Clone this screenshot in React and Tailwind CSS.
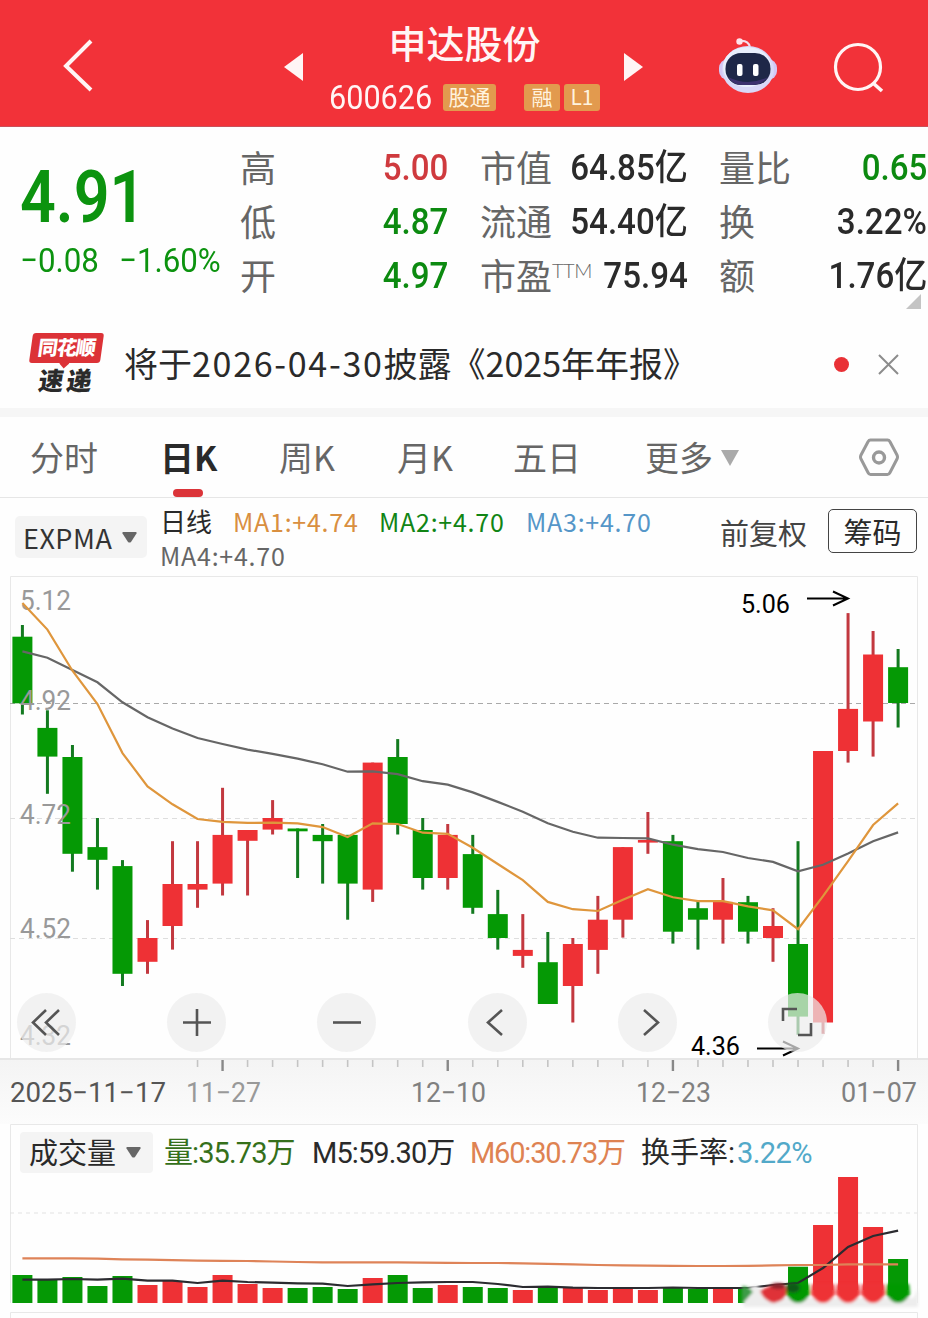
import React from "react";

const RED = "#ee3135";
const GREEN = "#059905";

// one row per trading day: [direction, high, body top, body bottom, low, volume top]
const days = [
  ["g", 625, 636.7, 703.3, 714.5, 1275],
  ["g", 710.3, 727.9, 756.6, 793.8, 1280],
  ["g", 745, 757, 853.8, 871.7, 1277],
  ["g", 818, 847.1, 859.8, 889.6, 1286],
  ["g", 860.1, 866.1, 973.8, 986, 1276],
  ["r", 920.1, 938, 961.8, 973.8, 1285],
  ["r", 841.2, 884, 926, 949.6, 1281],
  ["r", 841.2, 884, 889.6, 907.8, 1287],
  ["r", 787.8, 834.9, 883.6, 895.5, 1275],
  ["r", 830, 830, 840.8, 895.5, 1284],
  ["r", 800.1, 818, 829.6, 834.5, 1288],
  ["g", 828.5, 828.5, 831.3, 878, 1288],
  ["g", 824, 834.9, 841.2, 883.6, 1287],
  ["g", 834.9, 834.9, 883.6, 919.7, 1289],
  ["r", 762.6, 762.6, 889.6, 901.9, 1278],
  ["g", 739.1, 757, 824, 834.5, 1275],
  ["g", 818, 830, 878, 889.6, 1288],
  ["r", 824, 834.9, 878, 889.6, 1285],
  ["g", 834.9, 854.1, 907.8, 913.8, 1287],
  ["g", 889.9, 914.1, 938, 949.6, 1288],
  ["r", 914.1, 949.9, 955.9, 967.8, 1290],
  ["g", 932, 962.2, 1004, 1004, 1288],
  ["r", 938, 944, 986, 1022.5, 1287],
  ["r", 895.9, 919.7, 949.9, 973.8, 1290],
  ["r", 847.1, 847.1, 919.7, 937.6, 1289],
  ["r", 812, 840, 842.6, 853.8, 1290],
  ["g", 834.9, 841.2, 931.7, 943.6, 1287],
  ["g", 901.9, 908.2, 919.7, 949.6, 1289],
  ["r", 878, 901.9, 919.7, 943.6, 1289],
  ["g", 895.9, 902.2, 931.7, 943.6, 1288],
  ["r", 908.2, 926, 938, 961.8, 1285],
  ["g", 841.2, 944, 1016.6, 1034.8, 1266.7],
  ["r", 751, 751, 1022.5, 1033.8, 1225],
  ["r", 613.1, 708.9, 751, 762.6, 1177],
  ["r", 631, 654.5, 721.5, 756.6, 1227],
  ["g", 649, 667.2, 703, 727.5, 1259],
];

const fastLine = [
  603, 629.6, 670.7, 704, 753.1, 786.4, 804.3, 819, 821.9, 822.9, 822.6, 823.3,
  827.1, 837, 823.3, 824, 832.7, 833.8, 847.8, 864, 880.1, 901.9, 909.2, 911,
  899.8, 889.2, 897.3, 901.2, 901.2, 906.4, 910.3, 929.2, 896.2, 861.2, 825,
  803.3,
];

const slowLine = [
  651.4, 657.7, 670, 682.3, 702.3, 717.3, 728.6, 738, 744, 749.6, 753.8, 758.7,
  764.3, 771.7, 771.4, 774.2, 781.2, 784.7, 792.4, 801.9, 811.7, 823.3, 831.7,
  837.7, 838, 838.4, 844.7, 849.2, 852, 858, 861.9, 871.3, 864.7, 853.4, 841.2,
  832.4,
];

const volM5 = [
  1279.7, 1279.7, 1279, 1279.7, 1278.7, 1280.7, 1280.7, 1283, 1280.7, 1282,
  1282.7, 1283.3, 1283.7, 1286, 1284.3, 1283, 1282.3, 1282, 1282, 1284, 1287,
  1286.7, 1287.7, 1288, 1288, 1288, 1287.5, 1288, 1288, 1288, 1285, 1283,
  1268, 1247, 1236, 1230.7,
];

const volM60 = [
  1258.3, 1258.3, 1258.3, 1258.7, 1259.3, 1259.7, 1260.2, 1260.7, 1260.8, 1261,
  1261.5, 1262, 1262.4, 1262.4, 1262.4, 1262.4, 1262.6, 1262.8, 1263, 1263,
  1263.3, 1263.8, 1264.4, 1265, 1265.4, 1265.6, 1265.8, 1266, 1266, 1265.8,
  1265.4, 1265, 1265, 1264.3, 1264.3, 1264.3,
];

const xAt = (i) => 22.4 + i * 25.02;
const toPoints = (values) => values.map((y, i) => `${xAt(i)},${y}`).join(" ");
const colorOf = (dir) => (dir === "r" ? RED : GREEN);

const Badge = ({ children, className = "" }) => (
  <span
    className={`flex h-[27px] items-center justify-center rounded-[3px] bg-[#e29a4e] pb-[2px] text-[21px] leading-none text-[#fff3df] ${className}`}
  >
    {children}
  </span>
);

const Robot = () => (
  <svg width="60" height="58" viewBox="0 0 60 58">
    <path d="M22 5 Q30 4 32 11" fill="none" stroke="#f4dcec" strokeWidth="2" />
    <circle cx="21.500" cy="5.500" r="3.200" fill="#ffe3ea" />
    <rect x="1" y="23" width="58" height="21" rx="9" fill="#d3c7f4" />
    <ellipse cx="30" cy="33.500" rx="26" ry="23.500" fill="#d9d8f8" />
    <ellipse cx="29" cy="31" rx="24" ry="20" fill="#e9effd" />
    <rect x="7.500" y="17" width="45" height="32" rx="15.500" fill="#1e2748" />
    <path d="M10 41 Q30 51 50 41 Q44 49 34 49 H24 Q15 49 10 41" fill="#3d326f" />
    <rect x="19" y="28" width="5.500" height="12" rx="2" fill="#fff" />
    <rect x="35" y="28" width="5.500" height="12" rx="2" fill="#fff" />
  </svg>
);

const Header = () => (
  <header className="flex h-[127px] items-start border-b border-[#c9505a] bg-[#f23239] text-[#fff5f5]">
    <svg className="mt-[38px] ml-[60px]" width="36" height="56" viewBox="0 0 36 56">
      <path d="M31 3 L6 28 L31 52" fill="none" stroke="currentColor" strokeWidth="4" />
    </svg>
    <svg className="mt-[53px] ml-[188px]" width="19" height="28">
      <path d="M19 0 V28 L0 14 Z" fill="currentColor" />
    </svg>
    <div className="ml-[26px] w-[271px] pt-[22px]">
      <h1 className="text-center text-[38px] leading-[40px] font-medium">申达股份</h1>
      <div className="mt-[19px] flex h-[32px] items-center">
        <span className="w-[114px]">
          <span className="inline-block origin-left scale-x-90 font-[Roboto] text-[34px] leading-none">
            600626
          </span>
        </span>
        <Badge className="w-[53px]">股通</Badge>
        <Badge className="ml-[28px] w-[36px]">融</Badge>
        <Badge className="ml-[4px] w-[36px]">L1</Badge>
      </div>
    </div>
    <svg className="mt-[53px] ml-[24px]" width="19" height="28">
      <path d="M0 0 V28 L19 14 Z" fill="currentColor" />
    </svg>
    <div className="mt-[36px] ml-[75px]">
      <Robot />
    </div>
    <svg className="mt-[40px] ml-[54px]" width="54" height="54" viewBox="0 0 54 54">
      <circle cx="26" cy="27" r="22.500" fill="none" stroke="currentColor" strokeWidth="3.200" />
      <path d="M41 43 L50 51" stroke="currentColor" strokeWidth="3.600" />
    </svg>
  </header>
);

const Row = ({ label, sup, value, color = "text-[#2a2a2a]" }) => (
  <div className="flex h-[54px] items-center justify-between">
    <span className="flex pb-[5px] text-[36px] leading-none text-[#666]">
      {label}
      {sup && (
        <span className="mt-[4px] font-[Lato] text-[20px] leading-none font-light tracking-[-0.500px]">
          {sup}
        </span>
      )}
    </span>
    <span
      className={`origin-right scale-x-92 font-[Roboto,'Noto_Sans_CJK_SC',sans-serif] text-[36px] leading-none font-medium whitespace-nowrap ${color}`}
    >
      {value}
    </span>
  </div>
);

const Quote = () => (
  <section className="relative flex h-[193px] items-start pt-[14px]">
    <div className="w-[240px] pl-[20px] font-[Roboto] text-[#0c930f]">
      <div className="mt-[19px] origin-left scale-x-86 text-[73px] leading-[74px] font-semibold">
        4.91
      </div>
      <div className="mt-[8px] flex text-[34px] leading-[36px] whitespace-nowrap">
        <span className="w-[99px] origin-left scale-x-92">−0.08</span>
        <span className="origin-left scale-x-92">−1.60%</span>
      </div>
    </div>
    <div className="w-[208px]">
      <Row label="高" value="5.00" color="text-[#cf3a3e]" />
      <Row label="低" value="4.87" color="text-[#0c8a10]" />
      <Row label="开" value="4.97" color="text-[#0c8a10]" />
    </div>
    <div className="ml-[32px] w-[208px]">
      <Row label="市值" value="64.85亿" />
      <Row label="流通" value="54.40亿" />
      <Row label="市盈" sup="TTM" value="75.94" />
    </div>
    <div className="ml-[31px] w-[208px]">
      <Row label="量比" value="0.65" color="text-[#0c8a10]" />
      <Row label="换" value="3.22%" />
      <Row label="额" value="1.76亿" />
    </div>
    <svg className="absolute top-[167px] left-[906px]" width="15" height="15">
      <path d="M15 0 V15 H0 Z" fill="#c4c4c4" />
    </svg>
  </section>
);

const News = () => (
  <section className="flex h-[88px] items-center pl-[30px] text-[#2a2a2a]">
    <div className="w-[94px] pb-[2px]">
      <div className="relative ml-px flex h-[30px] w-[71px] -skew-x-8 items-center justify-center rounded-[3px] bg-[#dc3237] pb-[2px] text-[20px] leading-none font-black tracking-[-1px] text-white">
        同花顺
        <span className="absolute top-[27px] left-[32px] size-[7px] rotate-45 bg-[#dc3237]" />
      </div>
      <div className="mt-[3px] ml-[9px] -skew-x-8 text-[25px] leading-[27px] font-black tracking-[3px]">
        速递
      </div>
    </div>
    <p className="pb-[3px] text-[34px] leading-none whitespace-nowrap">
      将于<span className="tracking-[1.700px]">2026-04-30</span>披露《2025年年报》
    </p>
    <span className="ml-auto size-[15px] rounded-full bg-[#e93136]" />
    <svg className="mr-[29px] ml-[29px]" width="21" height="21" viewBox="0 0 21 21">
      <path d="M1 1 L20 20 M20 1 L1 20" stroke="#8c8c8c" strokeWidth="2" />
    </svg>
  </section>
);

const Tabs = () => (
  <nav className="flex h-[81px] border-b border-[#e6e6e6] pt-[21px] pl-[30px] text-[34px] leading-[38px] text-[#666]">
    <span className="w-[130px]">分时</span>
    <span className="flex w-[119px] flex-col font-bold text-[#2a2a2a]">
      日K
      <i className="mt-[13px] ml-[13px] h-[8px] w-[30px] rounded-full bg-[#db3439]" />
    </span>
    <span className="w-[118px]">周K</span>
    <span className="w-[116px]">月K</span>
    <span className="w-[132px]">五日</span>
    <span className="flex">
      更多
      <svg className="mt-[12px] ml-[8px]" width="18" height="16">
        <path d="M0 0 H18 L9 16 Z" fill="#aaa" />
      </svg>
    </span>
    <svg className="mr-[29px] ml-auto" width="40" height="40" viewBox="0 0 40 40">
      <path
        d="M11.5 2 H28.500 Q30 2 31 3.700 L38 17 Q39 19 38 21 L31 34.500 Q30 36.500 28.500 36.500 H11.500 Q10 36.500 9 34.500 L2 21 Q1 19 2 17 L9 3.700 Q10 2 11.500 2 Z"
        fill="none"
        stroke="#999"
        strokeWidth="3"
      />
      <circle cx="20" cy="19.500" r="5.500" fill="none" stroke="#999" strokeWidth="3.400" />
    </svg>
  </nav>
);

const Caret = () => (
  <svg width="15" height="11">
    <path d="M1 0 H14 Q15 0 14.500 1.500 L9 10 Q7.500 11 6 10 L0.500 1.500 Q0 0 1 0" fill="#666" />
  </svg>
);

const Indicators = () => (
  <div className="flex h-[78px] items-start pl-[15px]">
    <button className="mt-[18px] flex h-[42px] w-[132px] items-center justify-between rounded-[5px] bg-[#f4f4f4] pr-[10px] pl-[8px] text-[27px] leading-none tracking-[0.500px] text-[#333]">
      EXPMA
      <Caret />
    </button>
    <div className="mt-[6px] ml-[13px] w-[560px] text-[25px] leading-[34px] tracking-[0.750px] text-[#666]">
      <div className="flex whitespace-nowrap">
        <span className="w-[73px] text-[26px] tracking-normal text-[#2a2a2a]">日线</span>
        <span className="w-[146px] text-[#d98f40]">MA1:+4.74</span>
        <span className="w-[147px] text-[#118515]">MA2:+4.70</span>
        <span className="text-[#5596c8]">MA3:+4.70</span>
      </div>
      <div>MA4:+4.70</div>
    </div>
    <span className="mt-[18px] text-[29px] leading-[32px] text-[#444]">前复权</span>
    <button className="mt-[11px] mr-[11px] ml-auto h-[44px] w-[89px] rounded-[5px] border border-[#444] text-[29px] leading-[41px] text-[#2a2a2a]">
      筹码
    </button>
  </div>
);

const Num = ({ x, y, w, size = 27, fill = "#999", children }) => (
  <text
    x={x}
    y={y}
    textLength={w}
    lengthAdjust="spacingAndGlyphs"
    fontSize={size}
    fill={fill}
    className="font-[Roboto]"
  >
    {children}
  </text>
);

const ToolButton = ({ d, className = "" }) => (
  <button className={`size-[59px] rounded-full bg-[#ececec]/70 ${className}`}>
    <svg width="59" height="59" viewBox="0 0 59 59">
      <path d={d} fill="none" stroke="#555" strokeWidth="2.600" />
    </svg>
  </button>
);

const CandleChart = () => (
  <div className="relative h-[482px]">
    <svg width="928" height="482" viewBox="0 576 928 482" className="block overflow-visible">
      <path d="M10.500 1058 V576.500 H917.500 V1058" fill="none" stroke="#e8e8e8" />
      <path d="M10 703.500 H917" stroke="#a9a9a9" strokeDasharray="5 4" />
      <path d="M10 818.500 H917 M10 938.500 H917" stroke="#dedede" strokeDasharray="5 4" />
      {days.map(([dir, high, top, bottom, low], i) => (
        <g key={i} fill={colorOf(dir)}>
          <rect
            x={xAt(i) - 1.5}
            y={high}
            width="3"
            height={low - high}
            fill={dir === "r" ? "#c2383f" : "#137a20"}
          />
          <rect x={xAt(i) - 10} y={top} width="20" height={bottom - top} />
        </g>
      ))}
      <Num x="20" y="610" w="51">5.12</Num>
      <Num x="20" y="710" w="51">4.92</Num>
      <Num x="20" y="824" w="51">4.72</Num>
      <Num x="20" y="938" w="51">4.52</Num>
      <Num x="20" y="1045" w="51">4.32</Num>
      <polyline points={toPoints(slowLine)} fill="none" stroke="#666" strokeWidth="2.200" />
      <polyline points={toPoints(fastLine)} fill="none" stroke="#df963c" strokeWidth="2.200" />
      <Num x="741" y="613" w="49" size={25} fill="#000">5.06</Num>
      <Num x="691" y="1055" w="49" size={25} fill="#000">4.36</Num>
      <path
        d="M807 598.500 H848 M833 591.500 L848 598.500 L833 605.500 M757 1048.500 H798 M783 1041.500 L798 1048.500 L783 1055.500"
        fill="none"
        stroke="#000"
        strokeWidth="2"
      />
    </svg>
    <div className="absolute top-[417px] left-[17px] flex gap-[91.200px]">
      <ToolButton d="M29 17 L16 29.500 L29 42 M42 17 L29 29.500 L42 42" />
      <ToolButton d="M16 29.500 H44 M30 16 V43" />
      <ToolButton d="M16 29.500 H44" />
      <ToolButton d="M34 17 L20 29.500 L34 42" />
      <ToolButton d="M26 17 L40 29.500 L26 42" />
      <ToolButton d="M15 28 V16 H29 M43 30 V42 H30" />
    </div>
  </div>
);

const DateAxis = () => (
  <div className="h-[66px] border-t-2 border-[#e6e6e6] bg-linear-to-b from-[#f4f4f4] to-[#fcfcfc]">
    <svg width="928" height="64" viewBox="0 1060 928 64" className="block">
      {days.map((_, i) => {
        if (i < 7) return null;
        const major = (i - 8) % 9 === 0;
        return (
          <path
            key={i}
            d={`M${xAt(i)} 1060 V${major ? 1071 : 1067}`}
            stroke={major ? "#888" : "#c4c4c4"}
            strokeWidth={major ? 2.4 : 1.6}
          />
        );
      })}
      <Num x="10" y="1102" w="156" fill="#555">2025−11−17</Num>
      <Num x="186" y="1102" w="75">11−27</Num>
      <Num x="411" y="1102" w="75" fill="#808080">12−10</Num>
      <Num x="636" y="1102" w="75" fill="#808080">12−23</Num>
      <Num x="841" y="1102" w="76" fill="#808080">01−07</Num>
    </svg>
  </div>
);

const VolumePanel = () => (
  <section className="relative h-[194px]">
    <svg width="928" height="194" viewBox="0 1124 928 194" className="block">
      <path d="M10.500 1303 V1124.500 H917.500 V1303" fill="none" stroke="#e8e8e8" />
      <path d="M10.500 1318 V1312.500 H917.500 V1318" fill="none" stroke="#e8e8e8" />
      <path d="M10 1213 H917" stroke="#e2e2e2" strokeDasharray="4 4" />
      <defs>
        <filter id="smear" x="-20%" y="-40%" width="140%" height="180%">
          <feGaussianBlur stdDeviation="1.500" />
        </filter>
      </defs>
      {days.map(([dir, , , , , top], i) => {
        const bottom = i > 30 ? 1290 : 1303;
        const width = i === 29 ? 8 : 20;
        if (i === 30) return null;
        return (
          <rect
            key={i}
            x={xAt(i) - 10}
            y={top}
            width={width}
            height={bottom - top}
            fill={colorOf(dir)}
          />
        );
      })}
      <polyline points={toPoints(volM5)} fill="none" stroke="#2b2b30" strokeWidth="2.200" />
      {/* smeared strip under the last bars */}
      <g filter="url(#smear)">
        <path d="M742 1290 L756 1285 L768 1294 L786 1298 H914 L918 1288 V1307 H744 Z" fill="#ededed" />
        <path d="M742 1286 Q749 1286 753 1292 L744 1302 H742 Z" fill="#3e9b47" />
        <path d="M760 1291 Q774 1281 788 1289 Q786 1301 774 1303 Q764 1301 760 1291" fill="#df3038" />
        <ellipse cx="778" cy="1286" rx="8" ry="3" fill="#8e2029" />
        {[31, 32, 33, 34, 35].map((i) => (
          <path
            key={i}
            d={`M${xAt(i) - 11} 1284 H${xAt(i) + 11} L${xAt(i) + 12} 1294 Q${xAt(i) + 7} 1303 ${xAt(i)} 1303 Q${xAt(i) - 7} 1303 ${xAt(i) - 12} 1294 Z`}
            fill={colorOf(days[i][0])}
          />
        ))}
        <ellipse cx="793" cy="1288" rx="7" ry="5" fill="#0b5a14" />
      </g>
      <polyline points={toPoints(volM60)} fill="none" stroke="#de8358" strokeWidth="2.200" />
    </svg>
    <div className="absolute top-[8px] left-[20px] flex h-[41px] items-center text-[29px] leading-none whitespace-nowrap">
      <button className="flex h-[41px] w-[133px] items-center justify-between rounded-[4px] bg-[#f4f4f4] pr-[12px] pl-[9px] text-[#2a2a2a]">
        <span className="pb-[3px]">成交量</span>
        <Caret />
      </button>
      <div className="ml-[11px] flex pt-[2px] font-[Roboto,'Noto_Sans_CJK_SC',sans-serif] tracking-[-0.900px]">
        <span className="w-[148px] text-[#35701a]">量:35.73万</span>
        <span className="w-[158px] text-[#2a2a2a]">M5:59.30万</span>
        <span className="w-[171px] tracking-[-1.200px] text-[#de8352]">M60:30.73万</span>
        <span className="tracking-normal text-[#2a2a2a]">
          换手率:<span className="ml-[2px] tracking-[-0.600px] text-[#52a9c9]">3.22%</span>
        </span>
      </div>
    </div>
  </section>
);

const App = () => {
  return (
    <main className="h-[1318px] w-[928px] overflow-hidden bg-[#fefefe] font-['Noto_Sans_CJK_SC',sans-serif]">
      <Header />
      <Quote />
      <News />
      <div className="h-[9px] bg-[#f6f6f6]" />
      <Tabs />
      <Indicators />
      <CandleChart />
      <DateAxis />
      <VolumePanel />
    </main>
  );
};

export default App;
